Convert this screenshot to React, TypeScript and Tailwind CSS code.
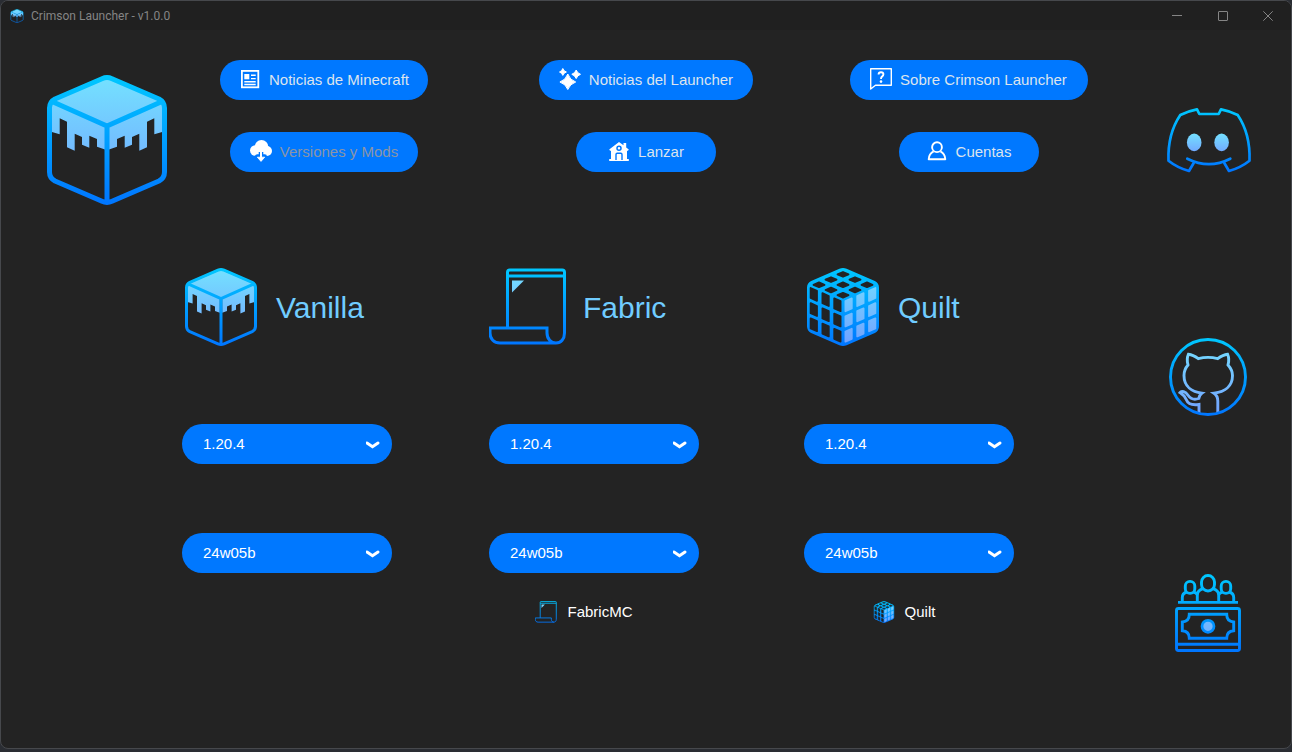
import { useId, useState, type ReactNode } from "react";

type IconProps = { className?: string };

function Gradients({ id, height }: { id: string; height: number }) {
  return (
    <defs>
      <linearGradient id={`${id}-line`} gradientUnits="userSpaceOnUse" x1="0" y1="0" x2="0" y2={height}>
        <stop offset="0" stopColor="#00c8ff" />
        <stop offset="1" stopColor="#0075ff" />
      </linearGradient>
      <linearGradient id={`${id}-fill`} gradientUnits="userSpaceOnUse" x1="0" y1="0" x2="0" y2={height}>
        <stop offset="0" stopColor="#74e2ff" />
        <stop offset="1" stopColor="#72a0ff" />
      </linearGradient>
    </defs>
  );
}

const HEXAGON =
  "M55 3.7Q60 1.5 65 3.7L112 24Q117.5 27 117.5 33V97Q117.5 103 112 106L65 126.3Q60 128.5 55 126.3L8 106Q2.5 103 2.5 97V33Q2.5 27 8 24Z";
const SNOW =
  "M4 26V56.7L12.7 59.3V43.3L20 46.7V72.3L27.7 75.7V58.7L35 62V69.7L42.3 72.7V60.7L50 64V71.7L58 74.5V50Z";

function SnowCube({ className }: IconProps) {
  const id = useId();
  return (
    <svg viewBox="-5 0 130 130" className={className} aria-hidden="true">
      <Gradients id={id} height={130} />
      <path d="M60 3L116 27L60 51L4 27Z" fill={`url(#${id}-fill)`} />
      <path d={SNOW} fill={`url(#${id}-fill)`} />
      <path d={SNOW} fill={`url(#${id}-fill)`} transform="matrix(-1 0 0 1 120 0)" />
      <path
        d={`${HEXAGON}M5 26.5L60 51L115 26.5M60 51V127`}
        fill="none"
        stroke={`url(#${id}-line)`}
        strokeWidth="5"
        strokeLinejoin="round"
      />
    </svg>
  );
}

type Point = [number, number];

function faceCells(origin: Point, u: Point, v: Point, mu: number, mv: number): string[] {
  const cells: string[] = [];
  const at = (a: number, b: number) =>
    `${(origin[0] + u[0] * a + v[0] * b).toFixed(2)},${(origin[1] + u[1] * a + v[1] * b).toFixed(2)}`;
  for (let i = 0; i < 3; i++) {
    for (let j = 0; j < 3; j++) {
      const a0 = (i + mu) / 3;
      const a1 = (i + 1 - mu) / 3;
      const b0 = (j + mv) / 3;
      const b1 = (j + 1 - mv) / 3;
      cells.push([at(a0, b0), at(a1, b0), at(a1, b1), at(a0, b1)].join(" "));
    }
  }
  return cells;
}

const TOP_CELLS = faceCells([60, 2], [-60, 26], [60, 26], 0.27, 0.27);
const LEFT_CELLS = faceCells([1.5, 27], [59, 26], [0, 76], 0.23, 0.17);
const RIGHT_CELLS = faceCells([59.5, 53], [59, -26], [0, 76], 0.23, 0.17);

function PuzzleCube({ className }: IconProps) {
  const id = useId();
  return (
    <svg viewBox="-5 0 130 130" className={className} aria-hidden="true">
      <Gradients id={id} height={130} />
      <path d={HEXAGON} fill={`url(#${id}-line)`} stroke={`url(#${id}-line)`} strokeWidth="5" />
      {[...TOP_CELLS, ...LEFT_CELLS].map((points) => (
        <polygon key={points} points={points} fill="#232323" stroke="#232323" strokeWidth="3" strokeLinejoin="round" />
      ))}
      {RIGHT_CELLS.map((points) => (
        <polygon
          key={points}
          points={points}
          fill={`url(#${id}-fill)`}
          stroke={`url(#${id}-fill)`}
          strokeWidth="3"
          strokeLinejoin="round"
        />
      ))}
    </svg>
  );
}

function Scroll({ className }: IconProps) {
  const id = useId();
  return (
    <svg viewBox="0 0 78 78" className={className} aria-hidden="true">
      <Gradients id={id} height={76} />
      <g fill="none" stroke={`url(#${id}-line)`} strokeWidth="3">
        <path d="M18.5 60V4.3Q18.500 2 20.800 2H73.200Q75.500 2 75.500 4.300V65C75.500 71 72 75 67 75H11C5 75 1 71 1 65V60H58V65C58 71 62 75 67 75" />
        <path d="M19 8H75" />
      </g>
      <path d="M23 12.500H35L23 24.500Z" fill={`url(#${id}-fill)`} />
    </svg>
  );
}

function DiscordMark({ className }: IconProps) {
  const id = useId();
  return (
    <svg viewBox="-1 0 84 82" className={className} aria-hidden="true">
      <defs>
        <linearGradient id={`${id}-l`} gradientUnits="userSpaceOnUse" x1="0" y1="10" x2="0" y2="74">
          <stop offset="0" stopColor="#00c8ff" />
          <stop offset="1" stopColor="#0075ff" />
        </linearGradient>
        <linearGradient id={`${id}-f`} gradientUnits="userSpaceOnUse" x1="0" y1="35" x2="0" y2="54">
          <stop offset="0" stopColor="#74e2ff" />
          <stop offset="1" stopColor="#72a8ff" />
        </linearGradient>
      </defs>
      <g fill="none" stroke={`url(#${id}-l)`} strokeWidth="2.700" strokeLinecap="round" strokeLinejoin="round">
        <path d="M26.700 65L22 73Q10 69.500 1.500 62.700Q0.500 36 13.300 17Q21 13 30 11.300L32.300 16H51.700L54 11.300Q63 13 70.700 17Q83.500 36 82.500 62.700Q74 69.500 62 73L57.300 65" />
        <path d="M20.300 60.700Q42 71.500 63.300 60.700" />
      </g>
      <ellipse cx="27.200" cy="44.400" rx="7.300" ry="8.800" fill={`url(#${id}-f)`} />
      <ellipse cx="54.600" cy="44.400" rx="7.300" ry="8.800" fill={`url(#${id}-f)`} />
    </svg>
  );
}

function GithubMark({ className }: IconProps) {
  const id = useId();
  return (
    <svg viewBox="0 0 78 78" className={className} aria-hidden="true">
      <Gradients id={id} height={78} />
      <g fill="none" stroke={`url(#${id}-fill)`} strokeWidth="2.900" strokeLinejoin="miter">
        <path d="M30 75V66.500C23 67.500 19 66 17.500 62C16 58.500 15 57 11 54.500C12.500 52.500 16.500 53.500 19 57.200C22 61.500 25.500 62 29.800 60.500C30.200 58 31.500 56.300 33 55.200C23 54 15 48.500 15 37.500C15 33 16.500 29.800 19 27C18 23.500 18 19.500 19.400 16.200C23 16.500 26.500 18.500 29.300 20.600C35.500 19 42.500 19 48.700 20.600C51.500 18.500 55 16.500 58.600 16.200C60 19.500 60 23.500 59 27C61.500 29.800 63.500 33 63.500 37.500C63.500 48.500 55.500 54 45 55.200C47.800 57 48.800 60 48.800 63V75" />
      </g>
      <circle cx="39" cy="39" r="37.500" fill="none" stroke={`url(#${id}-line)`} strokeWidth="2.900" />
    </svg>
  );
}

function Donors({ className }: IconProps) {
  const id = useId();
  return (
    <svg viewBox="0 0 66 78" className={className} aria-hidden="true">
      <Gradients id={id} height={78} />
      <g fill="none" stroke={`url(#${id}-line)`} strokeWidth="2.900">
        <rect x="26.500" y="1.500" width="13" height="15.500" rx="6.500" />
        <rect x="10.300" y="7.400" width="9.500" height="12" rx="4.700" />
        <rect x="46.200" y="7.400" width="9.500" height="12" rx="4.700" />
        <path d="M22.300 28V21.500Q22.300 16.500 28 14.700M43.700 28V21.500Q43.700 16.500 38 14.700M7.300 28V23.500Q7.300 19.300 11.700 18M58.700 28V23.500Q58.700 19.300 54.300 18M18.300 18Q21.300 18.500 22.500 21M47.700 18Q44.700 18.500 43.500 21" />
        <path d="M3 28.400H63" />
        <rect x="1.500" y="34.500" width="63" height="42" rx="2" />
        <path d="M1.400 70.300H64.600" />
        <path d="M14.300 40.300H51.700Q51.700 47.500 58.700 48V56.700Q51.700 57 51.700 64.300H14.300Q14.300 57 7.300 56.700V48Q14.300 47.500 14.300 40.300Z" />
      </g>
      <circle cx="33" cy="52.300" r="6" fill={`url(#${id}-fill)`} stroke={`url(#${id}-line)`} strokeWidth="2.700" />
    </svg>
  );
}

function SmallIcon({ children }: { children: ReactNode }) {
  return (
    <svg viewBox="0 0 22 22" className="mb-0.5 size-[22px] shrink-0" fill="none" stroke="white" aria-hidden="true">
      {children}
    </svg>
  );
}

const newsIcon = (
  <SmallIcon>
    <rect x="2.900" y="2.900" width="16.400" height="16.400" strokeWidth="1.800" />
    <rect x="5.300" y="6" width="5" height="5.300" fill="white" stroke="none" />
    <path d="M12 7.200H16.700M12 10.600H16.700M5.300 13.700H16.700M5.300 16.500H16.700" strokeWidth="1.400" />
  </SmallIcon>
);

const sparkleIcon = (
  <SmallIcon>
    <g fill="white" stroke="white" strokeWidth="1" strokeLinejoin="round">
      <path d="M8.800 6Q10.800 12 16.700 14Q10.800 16 8.800 21.500Q6.800 16 0.900 14Q6.800 12 8.800 6Z" />
      <path d="M3.800 0.500Q4.700 3.200 7.400 4Q4.700 4.800 3.800 7.400Q3 4.800 0.500 4Q3 3.200 3.800 0.500Z" />
      <path d="M17.200 2Q18.300 5.200 21.500 6.300Q18.300 7.400 17.200 10.600Q16 7.400 12.800 6.300Q16 5.200 17.200 2Z" />
    </g>
  </SmallIcon>
);

const questionIcon = (
  <SmallIcon>
    <path d="M0.700 0.700H21.300V17.300H5.500L0.700 21Z" strokeWidth="1.400" strokeLinejoin="round" />
    <path d="M8.600 6.400Q8.600 4.200 11 4.200Q13.400 4.200 13.400 6.300Q13.400 7.700 12 8.600Q11 9.300 11 11" strokeWidth="1.900" />
    <circle cx="11" cy="13.600" r="1.300" fill="white" stroke="none" />
  </SmallIcon>
);

const downloadIcon = (
  <SmallIcon>
    <g fill="white" stroke="none">
      <circle cx="5.200" cy="10.500" r="5.200" />
      <circle cx="11.500" cy="6.800" r="6.800" />
      <circle cx="17" cy="11" r="5" />
      <rect x="5" y="9" width="12" height="7" />
    </g>
    <path d="M11 12V18M7.300 16.600H14.700L11 21Z" stroke="#0078ff" strokeWidth="4.600" strokeLinejoin="round" />
    <path d="M11 10V18" strokeWidth="2" strokeLinecap="round" />
    <path d="M7.300 17.200H14.700L11 21.400Z" fill="white" strokeWidth="0.800" strokeLinejoin="round" />
  </SmallIcon>
);

const houseIcon = (
  <SmallIcon>
    <path
      d="M11 2L1.200 9.600L2.200 11L3 10.500V19H1.200V21H20.800V19H19V10.500L19.800 11L20.800 9.600L18.200 7.500V3H15.500V5.300Z"
      fill="white"
      stroke="none"
    />
    <circle cx="11" cy="8.300" r="2" stroke="#0078ff" strokeWidth="1.500" />
    <path d="M8 20V14.500Q8 13.300 9.200 13.300H12.800Q14 13.300 14 14.500V20" stroke="#0078ff" strokeWidth="1.400" />
  </SmallIcon>
);

const personIcon = (
  <SmallIcon>
    <circle cx="11" cy="7.200" r="4.900" strokeWidth="1.900" />
    <path d="M7.600 11.300Q3 13.500 2.700 19.200H19.300Q19 13.500 14.400 11.300" strokeWidth="1.900" strokeLinejoin="round" />
  </SmallIcon>
);

const NAV = [
  { label: "Noticias de Minecraft", icon: newsIcon, width: "w-[208px]" },
  { label: "Noticias del Launcher", icon: sparkleIcon, width: "w-[214px]" },
  { label: "Sobre Crimson Launcher", icon: questionIcon, width: "w-[238px]" },
  { label: "Versiones y Mods", icon: downloadIcon, width: "w-[188px]", current: true },
  { label: "Lanzar", icon: houseIcon, width: "w-[140px]" },
  { label: "Cuentas", icon: personIcon, width: "w-[140px]" },
];

function VersionSelect({ label, options }: { label: string; options: string[] }) {
  const [value, setValue] = useState(options[0]);
  return (
    <div className="relative w-[210px]">
      <select
        aria-label={label}
        value={value}
        onChange={(event) => setValue(event.target.value)}
        className="block h-10 w-full appearance-none rounded-[20px] bg-[#0078ff] pr-10 pl-[21px] text-[15px] text-white"
      >
        {options.map((option) => (
          <option key={option}>{option}</option>
        ))}
      </select>
      <svg
        viewBox="0 0 14 9"
        className="pointer-events-none absolute top-4 right-3 h-[9px] w-3.5"
        fill="none"
        stroke="white"
        strokeWidth="3"
        aria-hidden="true"
      >
        <path d="M1 3L6.500 6.700L12 3" strokeLinecap="round" strokeLinejoin="miter" />
      </svg>
    </div>
  );
}

const LOADERS = [
  { name: "Vanilla", Icon: SnowCube },
  { name: "Fabric", Icon: Scroll, link: "FabricMC", linkWidth: "w-[190px]" },
  { name: "Quilt", Icon: PuzzleCube, link: "Quilt", linkWidth: "w-[200px]" },
];

export default function App() {
  return (
    <div className="min-h-screen bg-[#2a2d33] pb-[3px] font-['Liberation_Sans',Arial,sans-serif]">
      <div className="flex min-h-[calc(100vh-3px)] flex-col overflow-hidden rounded-lg border border-[#46484c] bg-[#232323]">
        <header className="flex h-[29px] items-center bg-[#202020] pl-[9px] text-[#858585]">
          <SnowCube className="size-3.5" />
          <span className="ml-[7px] font-[Roboto,'Noto_Sans',sans-serif] text-xs">Crimson Launcher - v1.0.0</span>
          <div className="ml-auto flex h-full">
            <button type="button" aria-label="Minimizar" className="flex w-[46px] items-center justify-center">
              <svg viewBox="0 0 10 10" className="size-2.5" stroke="currentColor" aria-hidden="true">
                <path d="M0 4.500H10" />
              </svg>
            </button>
            <button type="button" aria-label="Maximizar" className="flex w-[45px] items-center justify-center">
              <svg viewBox="0 0 10 10" className="size-2.5" stroke="currentColor" fill="none" aria-hidden="true">
                <rect x="0.500" y="0.500" width="9" height="9" rx="0.500" />
              </svg>
            </button>
            <button type="button" aria-label="Cerrar" className="flex w-[46px] items-center justify-center">
              <svg viewBox="0 0 10 10" className="size-2.5" stroke="currentColor" aria-hidden="true">
                <path d="M0.300 0.300L9.700 9.700M9.700 0.300L0.300 9.700" />
              </svg>
            </button>
          </div>
        </header>

        <div className="flex flex-1">
          <main className="flex-1">
            <div className="flex pr-1 pl-[41px]">
              <SnowCube className="mt-[45px] size-[130px] shrink-0" />
              <nav className="grid flex-1 grid-cols-[304fr_340fr_305fr] content-start justify-items-center gap-y-8 pt-[30px]">
                {NAV.map(({ label, icon, width, current }) => (
                  <button
                    key={label}
                    type="button"
                    disabled={current}
                    className={`flex h-10 items-center justify-center gap-2 rounded-[20px] bg-[#0078ff] text-[15px] whitespace-nowrap ${width} ${current ? "text-[#8b95a5]" : "text-[#dce4ee]"}`}
                  >
                    {icon}
                    {label}
                  </button>
                ))}
              </nav>
            </div>

            <div className="grid grid-cols-[308fr_306fr_324fr] justify-items-center pt-[63px] pr-[54px] pl-[132px]">
              {LOADERS.map(({ name, Icon, link, linkWidth }) => (
                <section key={name} className="w-[210px]">
                  <h2 className="flex items-center gap-4 text-[30px] text-[#70ccff]">
                    <Icon className="size-[78px]" />
                    {name}
                  </h2>
                  <div className="mt-[78px] flex flex-col gap-[69px]">
                    <VersionSelect label={`${name}: versión estable`} options={["1.20.4", "1.20.3", "1.20.2"]} />
                    <VersionSelect label={`${name}: snapshot`} options={["24w05b", "24w05a", "24w04a"]} />
                  </div>
                  {link && (
                    <button
                      type="button"
                      className={`mt-[19px] flex h-10 items-center justify-center gap-2.5 text-[15px] text-white ${linkWidth}`}
                    >
                      <Icon className="size-[22px]" />
                      {link}
                    </button>
                  )}
                </section>
              ))}
            </div>
          </main>

          <aside className="flex w-[166px] shrink-0 flex-col items-center gap-[158px] pt-[68px]">
            <a href="#discord" aria-label="Discord">
              <DiscordMark className="h-[82px] w-[84px] overflow-visible" />
            </a>
            <a href="#github" aria-label="GitHub">
              <GithubMark className="size-[78px]" />
            </a>
            <a href="#patrocinadores" aria-label="Patrocinadores">
              <Donors className="h-[78px] w-[66px]" />
            </a>
          </aside>
        </div>
      </div>
    </div>
  );
}
